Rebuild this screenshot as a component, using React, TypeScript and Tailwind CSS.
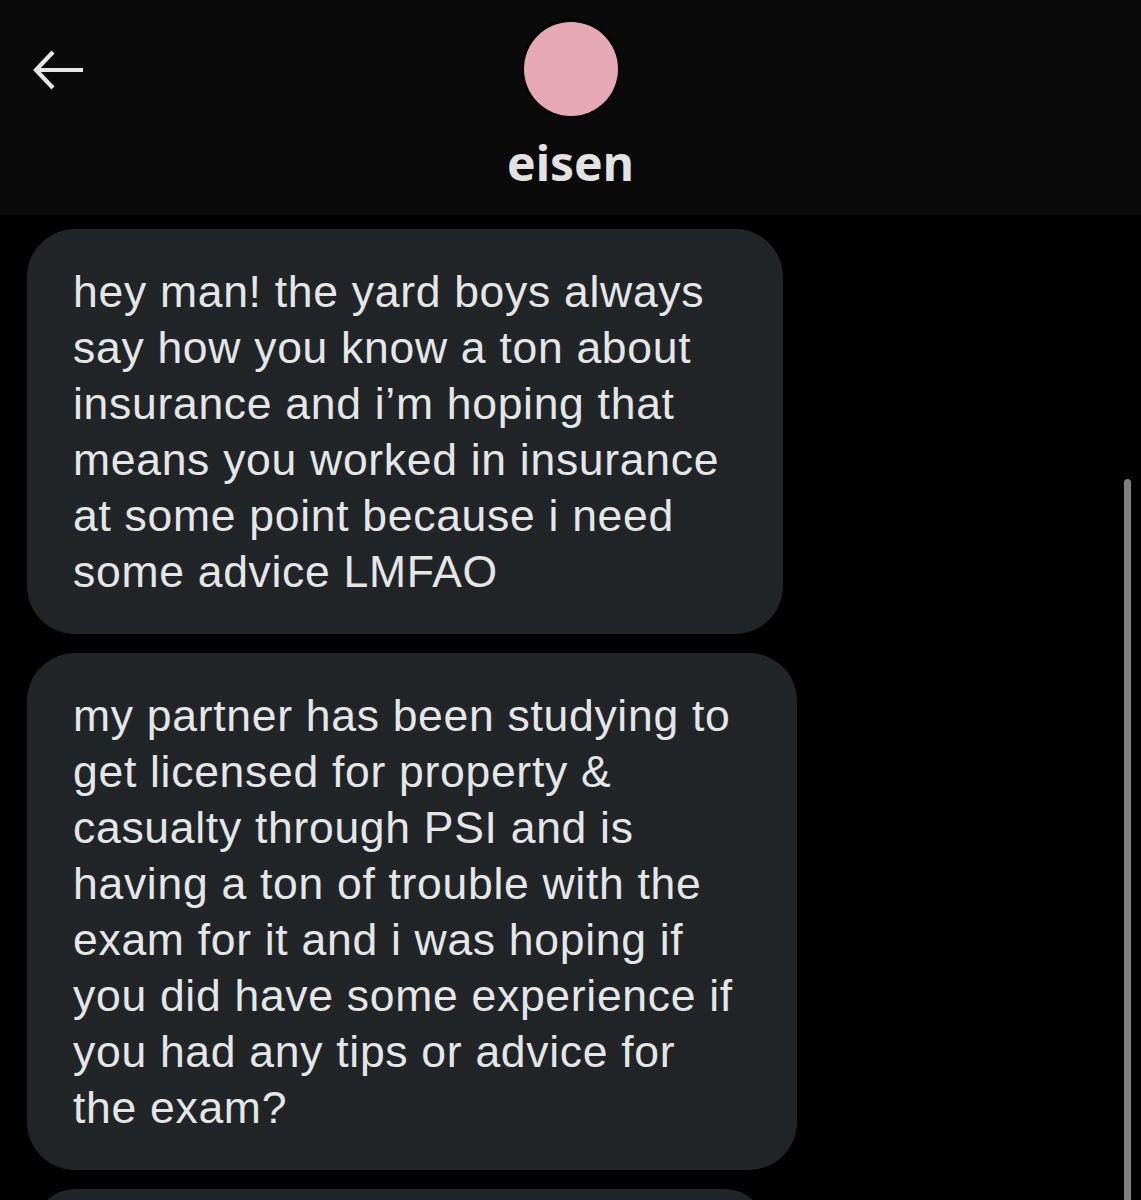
import React from "react";

const b1 = [
  "hey man! the yard boys always",
  "say how you know a ton about",
  "insurance and i’m hoping that",
  "means you worked in insurance",
  "at some point because i need",
  "some advice LMFAO",
];
const b2 = [
  "my partner has been studying to",
  "get licensed for property &",
  "casualty through PSI and is",
  "having a ton of trouble with the",
  "exam for it and i was hoping if",
  "you did have some experience if",
  "you had any tips or advice for",
  "the exam?",
];

function Bubble({ lines, w }: { lines: string[]; w: string }) {
  return (
    <div className={`${w} rounded-[48px] bg-[#222528] pl-[46px] pt-[35px] pb-[34px] text-[#e4e6e7]`}>
      {lines.map((l, i) => (
        <div key={i} className="h-[56px] leading-[56px] whitespace-nowrap">
          {l}
        </div>
      ))}
    </div>
  );
}

export default function App() {
  return (
    <div className="w-[1141px] h-[1200px] overflow-hidden bg-black relative" style={{ fontFamily: "'Liberation Sans', Arial, sans-serif" }}>
      <div className="h-[215px] bg-[#0a0a0a] relative flex flex-col items-center">
        <div className="absolute left-[33px] top-[48px]">
          <svg width="52" height="44" viewBox="0 0 52 44" fill="none" stroke="#e6e6e6" strokeWidth="4.2" strokeLinecap="butt">
            <path d="M50 22 H4" />
            <path d="M20 4 L3 22 L20 40" />
          </svg>
        </div>
        <div className="mt-[19px] w-[100px] h-[100px] rounded-full bg-[#050505] flex items-center justify-center">
          <div className="w-[94px] h-[94px] rounded-full bg-[#e6a8b6]" />
        </div>
        <div className="mt-[14px] text-[48px] leading-[60px] font-bold text-[#e2e2e2]" style={{ fontFamily: "'Noto Sans', 'Open Sans', sans-serif" }}>
          eisen
        </div>
      </div>
      <div className="pl-[27px] pt-[14px] flex flex-col gap-[19px] text-[44.5px] tracking-[0.7px]">
        <Bubble lines={b1} w="w-[756px]" />
        <Bubble lines={b2} w="w-[770px]" />
        <div className="ml-[8px] w-[730px] h-[80px] rounded-[48px] bg-[#222528]" />
      </div>
      <div className="absolute left-[1124px] top-[479px] w-[7px] h-[721px] rounded-t-full bg-[#808080]" />
    </div>
  );
}
